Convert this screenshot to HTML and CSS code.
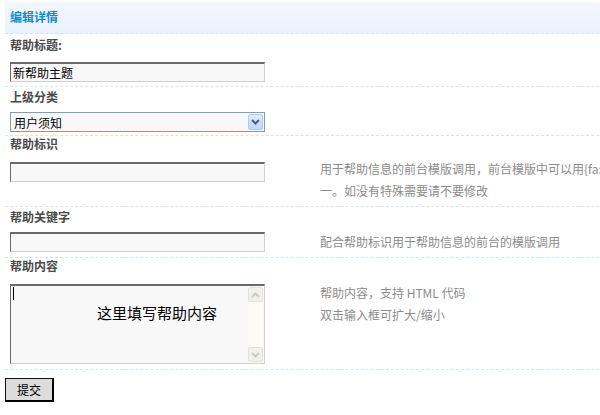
FILE: index.html
```html
<!DOCTYPE html>
<html lang="zh-CN">
<head>
<meta charset="utf-8">
<title>编辑详情</title>
<link rel="stylesheet" href="styles.css">
</head>
<body>
<div class="page">
  <form class="panel">
    <h2 class="panel-title">编辑详情</h2>

    <div class="row r-title">
      <div class="label">帮助标题:</div>
      <div class="field">
        <input class="text" type="text" value="新帮助主题">
      </div>
    </div>

    <div class="row r-parent">
      <div class="label">上级分类</div>
      <div class="field">
        <div class="select">
          <select class="select-native">
            <option>用户须知</option>
          </select>
          <span class="select-btn">
            <svg width="9" height="6" viewBox="0 0 9 6"><path d="M1 1 L4.5 4.5 L8 1" fill="none" stroke="#4d5f80" stroke-width="2"/></svg>
          </span>
        </div>
      </div>
    </div>

    <div class="row r-ident">
      <div class="label">帮助标识</div>
      <div class="field">
        <input class="text ident-input" type="text">
        <div class="tip">
          <span class="tip-line nowrap">用于帮助信息的前台模版调用，前台模版中可以用{fa:help:标识}调用，标识在前台模版中必须唯</span>
          <span class="tip-line">一。如没有特殊需要请不要修改</span>
        </div>
      </div>
    </div>

    <div class="row r-keyword">
      <div class="label">帮助关键字</div>
      <div class="field center">
        <input class="text" type="text">
        <div class="tip">配合帮助标识用于帮助信息的前台的模版调用</div>
      </div>
    </div>

    <div class="row r-content">
      <div class="label">帮助内容</div>
      <div class="field">
        <div class="editor">
          <div class="editor-body">
            <span class="caret"></span>
            <span class="editor-hint">这里填写帮助内容</span>
          </div>
          <div class="scrollbar">
            <span class="sb-btn">
              <svg width="9" height="6" viewBox="0 0 9 6"><path d="M1 5 L4.5 1.5 L8 5" fill="none" stroke="#c9cbc0" stroke-width="2"/></svg>
            </span>
            <span class="sb-track"></span>
            <span class="sb-btn">
              <svg width="9" height="6" viewBox="0 0 9 6"><path d="M1 1 L4.5 4.5 L8 1" fill="none" stroke="#c9cbc0" stroke-width="2"/></svg>
            </span>
          </div>
        </div>
        <div class="tip">
          <span class="tip-line">帮助内容，支持 HTML 代码</span>
          <span class="tip-line">双击输入框可扩大/缩小</span>
        </div>
      </div>
    </div>

    <div class="actions">
      <button class="submit" type="button">提交</button>
    </div>
  </form>
</div>
</body>
</html>
```

FILE: styles.css
```css
html, body {
  margin: 0;
  padding: 0;
  background: #fff;
  overflow: hidden;
}

body {
  font-family: "Noto Sans CJK SC", "Liberation Sans", sans-serif;
  font-size: 12px;
  color: #333;
}

.page {
  padding: 2px 0 0 5px;
  width: 900px;
}

.panel {
  margin: 0;
}

.panel-title {
  margin: 0;
  height: 31px;
  line-height: 30px;
  padding-left: 5px;
  font-size: 12px;
  font-weight: bold;
  color: #0b8fd0;
  background: linear-gradient(#f2f7fd, #e9f2fb);
  border-bottom: 1px dashed #d6e4f1;
}

.row {
  padding-left: 5px;
  border-bottom: 1px dashed #d6e4f1;
}

.label {
  height: 16px;
  line-height: 16px;
  font-weight: bold;
  color: #4a4a4a;
}

.field {
  display: flex;
  align-items: flex-start;
}

.field.center {
  align-items: center;
}

/* text inputs */
.text {
  box-sizing: border-box;
  flex: none;
  width: 255px;
  height: 20px;
  margin: 0;
  padding: 0 2px;
  font-family: inherit;
  font-size: 12px;
  color: #000;
  background: #f8f8f8;
  border: 1px solid;
  border-color: #6a6a6a #cfcfcf #cfcfcf #6a6a6a;
  border-top-width: 2px;
  outline: none;
}

/* spacing of each form block */
.r-title { padding-top: 3px; padding-bottom: 4px; }
.r-title .field { margin-top: 9px; }

.r-parent { padding-top: 2px; padding-bottom: 3px; }
.r-parent .field { margin-top: 7px; }

.r-ident { padding-top: 0; padding-bottom: 4px; }
.r-ident .field { margin-top: 6px; }
.r-ident .ident-input { margin-top: 4px; }

.r-keyword { padding-top: 2px; padding-bottom: 4px; }
.r-keyword .field { margin-top: 6px; }

.r-content { padding-top: 0; padding-bottom: 5px; }
.r-content .field { margin-top: 8px; }
.r-content .editor { margin-top: 2px; }

/* dropdown */
.select {
  box-sizing: border-box;
  width: 255px;
  height: 20px;
  padding: 1px;
  display: flex;
  align-items: stretch;
  border: 1px solid #7f9db9;
  background: #f8f8f8;
}

.select-native {
  flex: 1;
  min-width: 0;
  margin: 0;
  padding: 0 0 0 2px;
  border: 0;
  background: transparent;
  -webkit-appearance: none;
  appearance: none;
  font-family: inherit;
  font-size: 12px;
  color: #000;
  outline: none;
}

.select-btn {
  box-sizing: border-box;
  width: 15px;
  display: flex;
  align-items: center;
  justify-content: center;
  border: 1px solid #b1c9ef;
  border-radius: 2px;
  background: linear-gradient(#e1ecfd, #bfd5f8);
}

/* help notes on the right */
.tip {
  margin-left: 55px;
  line-height: 22px;
  color: #8c8c8c;
  white-space: nowrap;
}

.tip-line {
  display: block;
}

/* content editor */
.editor {
  box-sizing: border-box;
  flex: none;
  width: 255px;
  height: 80px;
  display: flex;
  background: #f8f8f8;
  border: 1px solid;
  border-color: #6a6a6a #cfcfcf #cfcfcf #6a6a6a;
  border-top-width: 2px;
}

.editor-body {
  flex: 1;
  padding: 1px 2px;
}

.caret {
  display: block;
  width: 1px;
  height: 13px;
  background: #000;
}

.editor-hint {
  display: block;
  margin: 3px 0 0 84px;
  font-size: 15px;
  line-height: 20px;
  color: #000;
  white-space: nowrap;
}

.scrollbar {
  width: 15px;
  margin-right: 1px;
  padding: 1px 0;
  display: flex;
  flex-direction: column;
  background: #fcfcf4;
}

.sb-btn {
  box-sizing: border-box;
  height: 15px;
  display: flex;
  align-items: center;
  justify-content: center;
  border: 1px solid #e2e2da;
  border-radius: 2px;
  background: #f1f1ea;
}

.sb-track {
  flex: 1;
}

/* submit */
.actions {
  padding-top: 8px;
}

.submit {
  box-sizing: border-box;
  width: 49px;
  height: 24px;
  margin: 0;
  padding: 0;
  font-family: inherit;
  font-size: 12px;
  color: #000;
  background: #dcdcdc;
  border-style: solid;
  border-color: #111 #000 #000 #111;
  border-width: 1px 2px 2px 1px;
}
```
